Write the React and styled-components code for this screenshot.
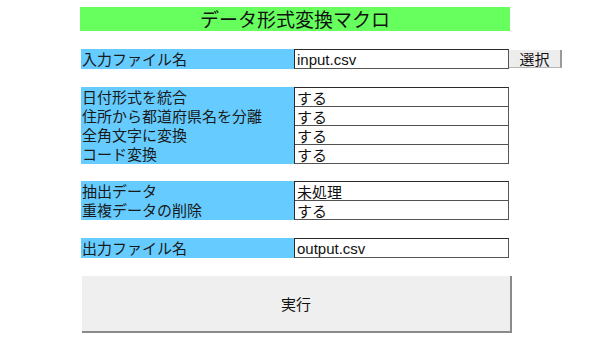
import React from "react";
import styled, { createGlobalStyle } from "styled-components";

const Global = createGlobalStyle`
  html, body { margin: 0; padding: 0; background: #ffffff; }
  body { font-family: "Liberation Sans", "Noto Sans CJK JP", sans-serif; color: #111; }
`;

const Page = styled.div`
  width: 598px;
  height: 340px;
  box-sizing: border-box;
  padding: 7px 0 0 80px;
  display: flex;
  flex-direction: column;
  align-items: flex-start;
`;

const Title = styled.div`
  width: 430px;
  height: 24px;
  background: #66ff5e;
  display: flex;
  align-items: center;
  justify-content: center;
  font-family: "Noto Sans CJK JP", sans-serif;
  font-size: 19px;
  line-height: 24px;
  color: #111;
`;

const Group = styled.div`
  margin-top: ${(p) => p.$gap}px;
  display: grid;
  grid-template-columns: 214px 215px 53px;
  align-items: start;
`;

const Labels = styled.div`
  margin-left: 1px;
  background: #66ccff;
  display: flex;
  flex-direction: column;
  align-self: stretch;
`;

const Label = styled.div`
  height: ${(p) => p.$h}px;
  display: flex;
  align-items: flex-end;
  padding-left: 1px;
  font-family: "Noto Sans CJK JP", sans-serif;
  font-size: 15px;
  line-height: 18px;
  color: #1a1a1a;
  white-space: nowrap;
`;

const Values = styled.div`
  border: 1px solid #2a2a2a;
  border-right-color: #555;
  border-bottom-color: #555;
  display: flex;
  flex-direction: column;
`;

const Value = styled.div`
  height: ${(p) => p.$h}px;
  box-sizing: border-box;
  border-top: ${(p) => (p.$first ? "none" : "1px solid #505050")};
  padding-left: 2px;
  display: flex;
  align-items: flex-end;
  font-family: ${(p) =>
    p.$latin ? `"Liberation Sans", sans-serif` : `"Noto Sans CJK JP", sans-serif`};
  font-size: 15px;
  line-height: 17px;
  color: #111;
  white-space: nowrap;
`;

const SelectButton = styled.button`
  margin-top: 1px;
  width: 53px;
  height: 18px;
  box-sizing: border-box;
  padding: 0;
  background: #ededed;
  border: none;
  border-right: 2px solid #9a9a9a;
  border-bottom: 1px solid #b5b5b5;
  font-family: "Noto Sans CJK JP", sans-serif;
  font-size: 15px;
  line-height: 18px;
  color: #111;
  display: flex;
  align-items: center;
  justify-content: center;
`;

const RunButton = styled.button`
  margin-top: 18px;
  margin-left: 2px;
  width: 430px;
  height: 57px;
  box-sizing: border-box;
  background: #efefef;
  border: none;
  border-right: 2px solid #8a8a8a;
  border-bottom: 2px solid #8a8a8a;
  font-family: "Noto Sans CJK JP", sans-serif;
  font-size: 15px;
  color: #111;
  padding: 0;
`;

function Section({ gap, rows, button }) {
  return (
    <Group $gap={gap}>
      <Labels>
        {rows.map((r, i) => (
          <Label key={i} $h={19}>
            {r.label}
          </Label>
        ))}
      </Labels>
      <Values>
        {rows.map((r, i) => (
          <Value key={i} $first={i === 0} $latin={r.latin} $h={i === 0 ? 18 : 19}>
            {r.value}
          </Value>
        ))}
      </Values>
      {button ? <SelectButton>{button}</SelectButton> : <span />}
    </Group>
  );
}

export default function App() {
  return (
    <>
      <Global />
      <Page>
        <Title>データ形式変換マクロ</Title>
        <Section
          gap={18}
          button="選択"
          rows={[{ label: "入力ファイル名", value: "input.csv", latin: true }]}
        />
        <Section
          gap={18}
          rows={[
            { label: "日付形式を統合", value: "する" },
            { label: "住所から都道府県名を分離", value: "する" },
            { label: "全角文字に変換", value: "する" },
            { label: "コード変換", value: "する" },
          ]}
        />
        <Section
          gap={17}
          rows={[
            { label: "抽出データ", value: "未処理" },
            { label: "重複データの削除", value: "する" },
          ]}
        />
        <Section
          gap={18}
          rows={[{ label: "出力ファイル名", value: "output.csv", latin: true }]}
        />
        <RunButton>実行</RunButton>
      </Page>
    </>
  );
}
